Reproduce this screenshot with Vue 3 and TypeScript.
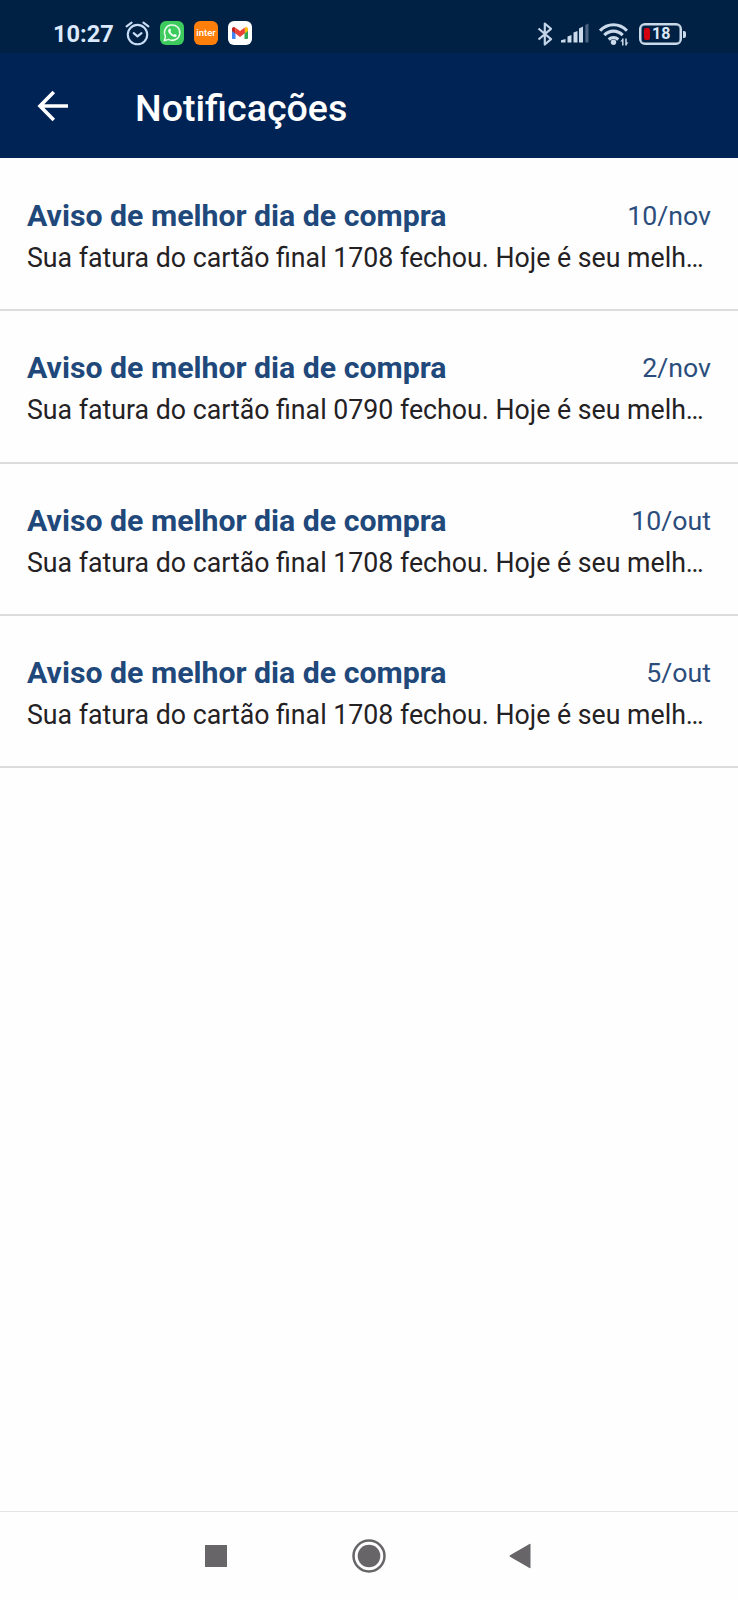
<script setup lang="ts">
interface Notice {
  id: number
  title: string
  date: string
  text: string
}

const title = 'Aviso de melhor dia de compra'
const preview = (card: string): string =>
  `Sua fatura do cartão final ${card} fechou. Hoje é seu melh…`

const notices: Notice[] = [
  { id: 1, title, date: '10/nov', text: preview('1708') },
  { id: 2, title, date: '2/nov', text: preview('0790') },
  { id: 3, title, date: '10/out', text: preview('1708') },
  { id: 4, title, date: '5/out', text: preview('1708') },
]
</script>

<template>
  <div class="screen">
    <div class="status">
      <div class="status-left">
        <span class="clock">10:27</span>
        <svg class="alarm" width="25" height="25" viewBox="0 0 25 25" fill="none" stroke="#c9dcf5" stroke-width="2.1" stroke-linecap="round" stroke-linejoin="round">
          <circle cx="12.5" cy="13.6" r="9.7" />
          <path d="M1.6 5.4 6.6 1.6M23.4 5.4l-5-3.8M8.7 12.1l3.8 3.3 4-3.3" />
        </svg>
        <svg class="app" width="24" height="24" viewBox="0 0 24 24">
          <rect width="24" height="24" rx="6" fill="#3ccb5c" />
          <path d="M4.300 19.700l1.200-4.200a7.700 7.700 0 1 1 3 2.900z" fill="none" stroke="#e6fbe9" stroke-width="1.500" stroke-linejoin="round" />
          <path d="M9.100 7.700c.5-.4 1-.3 1.300.4l.6 1.400c.2.5-.7 1.100-.5 1.500.7 1.200 1.600 2.100 2.900 2.700.5.2.9-.9 1.400-.7l1.500.7c.8.4.3 1.700-.4 2.100-2.500 1.500-8.300-3.600-7.700-6.200.1-.8.5-1.500.9-1.900z" fill="#f2fff4" />
        </svg>
        <span class="inter">inter</span>
        <svg class="app" width="24" height="24" viewBox="0 0 24 24">
          <rect width="24" height="24" rx="6" fill="#fff" />
          <path d="M4 8v9.300c0 .5.3.7.7.7h2.800v-8z" fill="#4285f4" />
          <path d="M20 8v9.300c0 .5-.3.7-.7.7h-2.800v-8z" fill="#34a853" />
          <path d="M4 8.300c0-2.300 1.800-2.900 3.200-1.800v6L4 10z" fill="#c5221f" />
          <path d="M20 8.300c0-2.300-1.800-2.900-3.200-1.800v6L20 10z" fill="#fbbc04" />
          <path d="M7.200 6.500 12 10.100l4.800-3.600v5.800L12 15.900l-4.800-3.600z" fill="#ea4335" />
        </svg>
      </div>
      <div class="status-right">
        <svg class="bt" width="16" height="24" viewBox="0 0 16 24" fill="none" stroke="#c3d3e8" stroke-width="2.200" stroke-linejoin="round">
          <path d="M1.500 6.500 14 17.200 7.800 22.500V1.500L14 6.800 1.500 17.500" />
        </svg>
        <svg class="signal" width="28" height="20" viewBox="0 0 28 20" fill="#cbdaea">
          <path d="M0 19.500v-2.200l4.500-1.300v3.500zM6.500 13.500l4-1.500v7.500h-4zM12.500 9.500l4-1.500v11.500h-4zM18 5.500l4-2v16h-4z" />
          <path d="M24.300 2 27.500.5v19h-3.200z" fill="#4b6280" />
        </svg>
        <svg class="wifi" width="30" height="24" viewBox="0 0 30 24" fill="none" stroke="#cbdaea" stroke-width="3.100">
          <path d="M1.100 8.700C8.500.7 20.500.7 27.900 8.700M5.300 13.200c5.200-5.400 13.200-5.400 18.400 0M9.700 17.500c2.900-2.600 6.700-2.600 9.600 0" />
          <circle cx="14.500" cy="20.300" r="2.700" fill="#cbdaea" stroke="none" />
          <path d="M23.800 16.500v7M27 16.500v7" stroke-width="1.500" />
          <path d="m21.300 19.600 2.500-3.100v3.100zM29.500 20.400 27 23.500v-3.100z" fill="#cbdaea" stroke="none" />
        </svg>
        <span class="battery"><span class="charge"></span><span class="percent">18</span></span>
        <span class="cap"></span>
      </div>
    </div>

    <header class="header">
      <svg class="back" width="32" height="32" viewBox="0 0 32 32" fill="none" stroke="#fff" stroke-width="3.600">
        <path d="M16.800 2 3 16l13.800 14M3.200 16H31" />
      </svg>
      <h1>Notificações</h1>
    </header>

    <main class="list">
      <article v-for="n in notices" :key="n.id" class="notice">
        <div class="row">
          <h2>{{ n.title }}</h2>
          <time>{{ n.date }}</time>
        </div>
        <p>{{ n.text }}</p>
      </article>
    </main>

    <nav class="navbar">
      <svg width="22" height="22" viewBox="0 0 22 22"><rect width="22" height="22" fill="#676568" /></svg>
      <svg class="home" width="34" height="34" viewBox="0 0 34 34">
        <circle cx="17" cy="17" r="15.500" fill="none" stroke="#676568" stroke-width="2.500" />
        <circle cx="17" cy="17" r="11.300" fill="#676568" />
      </svg>
      <svg class="prev" width="22" height="26" viewBox="0 0 22 26"><path d="M1 12.300 20.500 1q1-.5 1 .5v23q0 1-1 .5L1 13.700q-1-.7 0-1.400z" fill="#676568" /></svg>
    </nav>
  </div>
</template>

<style>
body {
  margin: 0;
  background: #fefefe;
}
</style>

<style scoped>
.screen {
  display: flex;
  flex-direction: column;
  width: 738px;
  height: 1600px;
  overflow: hidden;
  background: #fefefe;
  font-family: Roboto, "Liberation Sans", sans-serif;
}
h1,
h2,
p {
  margin: 0;
}
.status {
  display: flex;
  justify-content: space-between;
  box-sizing: border-box;
  height: 53px;
  padding: 13px 53px 0;
  background: #002143;
}
.status-left,
.status-right {
  display: flex;
  align-items: flex-start;
  height: 40px;
}
.clock {
  width: 72px;
  font-size: 23.6px;
  font-weight: 700;
  line-height: 42px;
  color: #dceaff;
  white-space: nowrap;
}
.app,
.inter {
  margin: 8px 0 0 10px;
}
.alarm {
  margin-top: 8px;
}
.inter {
  width: 24px;
  height: 24px;
  border-radius: 6px;
  background: #ff7f0a;
  color: #fff;
  font-size: 9.5px;
  font-weight: 500;
  line-height: 23px;
  text-align: center;
}
.bt {
  margin-top: 9px;
}
.signal {
  margin: 10px 0 0 8px;
}
.wifi {
  margin: 9px 0 0 10px;
}
.battery {
  display: flex;
  align-items: center;
  box-sizing: border-box;
  width: 43px;
  height: 22px;
  margin: 10px 0 0 10px;
  padding-left: 3px;
  border: 2px solid #cbdaea;
  border-radius: 6px;
  box-shadow: inset 0 0 0 0.5px #cbdaea;
}
.charge {
  width: 6px;
  height: 12px;
  border-radius: 2px;
  background: #d3000f;
}
.percent {
  margin-left: 2px;
  font-size: 16px;
  font-weight: 700;
  line-height: 18px;
  color: #dce9f8;
}
.cap {
  width: 3px;
  height: 7px;
  margin: 18px -1px 0 1px;
  border-radius: 0 2px 2px 0;
  background: #cbdaea;
}
.header {
  display: flex;
  height: 105px;
  background: #002356;
}
.back {
  margin: 37px 0 0 37px;
}
h1 {
  margin-left: 66px;
  font-size: 37.6px;
  font-weight: 500;
  line-height: 111px;
  color: #fff;
}
.list {
  padding-top: 1px;
}
.notice {
  box-sizing: border-box;
  height: 152.3px;
  padding: 37px 27px 0;
  border-bottom: 2px solid #dcdcdc;
}
.row {
  display: flex;
  justify-content: space-between;
  height: 41px;
}
h2 {
  font-size: 30.25px;
  font-weight: 700;
  line-height: 40px;
  color: #20487a;
}
time {
  font-size: 26.7px;
  line-height: 40px;
  color: #2b4d7c;
}
p {
  font-size: 26.72px;
  line-height: 43px;
  color: #242124;
  white-space: nowrap;
}
.navbar {
  display: flex;
  align-items: center;
  box-sizing: border-box;
  height: 89px;
  margin-top: auto;
  padding-left: 205px;
  border-top: 1px solid #e3e3e3;
}
.home {
  margin-left: 125px;
}
.prev {
  margin-left: 123px;
}
</style>
